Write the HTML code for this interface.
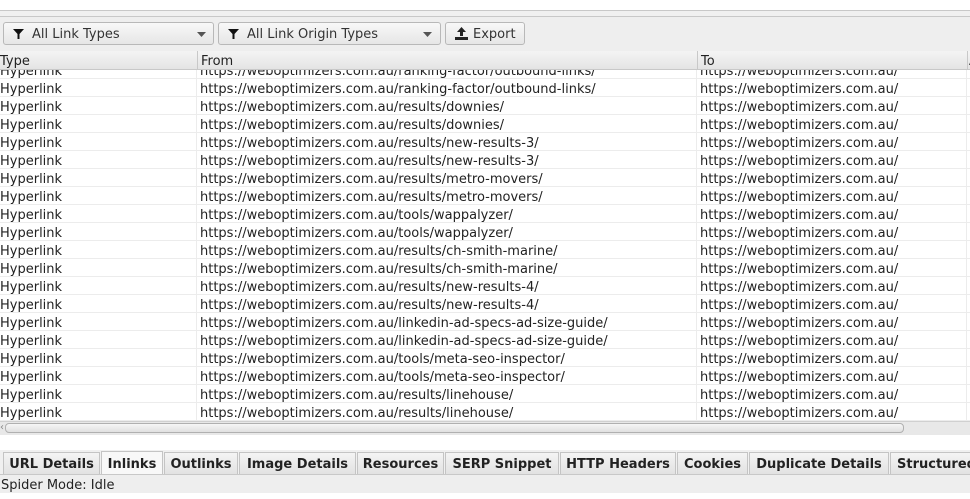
<!DOCTYPE html>
<html><head><meta charset="utf-8"><style>
*{margin:0;padding:0;box-sizing:border-box}
body{width:970px;height:493px;overflow:hidden;background:#fff;font-family:"DejaVu Sans","Liberation Sans",sans-serif;font-size:13px;color:#222;position:relative}
.abs{position:absolute}
.btn{position:absolute;top:22px;height:23px;border:1px solid #b8b8b8;border-radius:3px;background:linear-gradient(#f8f8f8,#e6e6e6);line-height:23px;color:#333}
.hdr{position:absolute;top:51px;height:19px;background:linear-gradient(#f4f4f4,#e4e4e4);border-bottom:1px solid #c8c8c8;line-height:22px;color:#222}
.row{position:absolute;left:0;width:970px;height:18px;border-bottom:1px solid #ececec;line-height:21px;white-space:nowrap}
.row span{position:absolute;top:0}
.tab{position:absolute;top:452px;height:22px;border:1px solid #c4c4c4;border-bottom:none;background:linear-gradient(#f4f4f4,#e2e2e2);font-weight:bold;line-height:23px;text-align:center;color:#222}
</style></head><body>
<div class="abs" style="left:0;top:10px;width:970px;height:1px;background:#c8c8c8"></div>
<div class="abs" style="left:0;top:11px;width:970px;height:5px;background:#f0f0f0"></div>
<div class="abs" style="left:0;top:16px;width:970px;height:35px;background:#eeeeee;border-top:1px solid #c8c8c8"></div>
<div class="btn" style="left:3px;width:211px"><svg class="abs" style="left:9px;top:6px" width="11" height="10" viewBox="0 0 11 10"><path d="M0 0H11L6.5 5V10H4.5V5Z" fill="#111"/></svg><span class="abs" style="left:28px">All Link Types</span><svg class="abs" style="left:193px;top:9px" width="9" height="5"><path d="M0 0H9L4.5 5Z" fill="#555"/></svg></div>
<div class="btn" style="left:218px;width:223px"><svg class="abs" style="left:9px;top:6px" width="11" height="10" viewBox="0 0 11 10"><path d="M0 0H11L6.5 5V10H4.5V5Z" fill="#111"/></svg><span class="abs" style="left:28px">All Link Origin Types</span><svg class="abs" style="left:204px;top:9px" width="9" height="5"><path d="M0 0H9L4.5 5Z" fill="#555"/></svg></div>
<div class="btn" style="left:445px;width:80px"><svg class="abs" style="left:9px;top:4px" width="13" height="13" viewBox="0 0 13 13"><path d="M6.5 0L11 5H8V9H5V5H2Z M0 10H13V13H0Z" fill="#222"/></svg><span class="abs" style="left:27px">Export</span></div>
<div class="abs" style="left:0;top:70px;width:970px;height:351px;background:#fff;overflow:hidden">
<div id="rows"></div>
</div>
<div class="hdr" style="left:0;width:197px;padding-left:0">Type</div>
<div class="hdr" style="left:197px;width:500px;border-left:1px solid #c8c8c8;padding-left:3px">From</div>
<div class="hdr" style="left:697px;width:270px;border-left:1px solid #c8c8c8;padding-left:3px">To</div>
<div class="hdr" style="left:967px;width:3px;border-left:1px solid #c8c8c8;padding-left:1px">A</div>
<div class="abs" style="left:196px;top:70px;width:1px;height:351px;background:#ececec"></div>
<div class="abs" style="left:696px;top:70px;width:1px;height:351px;background:#ececec"></div>
<div class="abs" style="left:966px;top:70px;width:1px;height:351px;background:#ececec"></div>
<div class="abs" style="left:0;top:421px;width:970px;height:14px;background:#e8e8e8;border-top:1px solid #d0d0d0"></div>
<div class="abs" style="left:0;top:422px;font-size:10px;color:#888;line-height:12px">&lsaquo;</div>
<div class="abs" style="left:5px;top:423px;width:899px;height:10px;border:1px solid #b0b0b0;border-radius:4px;background:linear-gradient(#f6f6f6,#e0e0e0)"></div>
<div class="abs" style="left:0;top:450px;width:970px;height:26px;background:#f0f0f0"></div>
<div class="tab" style="left:3px;width:97px">URL Details</div>
<div class="tab" style="left:101px;width:62px;background:#f8f8f8;top:451px;height:23px;line-height:25px">Inlinks</div>
<div class="tab" style="left:164px;width:74px">Outlinks</div>
<div class="tab" style="left:239px;width:117px">Image Details</div>
<div class="tab" style="left:357px;width:87px">Resources</div>
<div class="tab" style="left:445px;width:114px">SERP Snippet</div>
<div class="tab" style="left:560px;width:116px">HTTP Headers</div>
<div class="tab" style="left:677px;width:71px">Cookies</div>
<div class="tab" style="left:749px;width:140px">Duplicate Details</div>
<div class="tab" style="left:890px;width:90px;text-align:left;padding-left:6px">Structured Data</div>
<div class="abs" style="left:0;top:474px;width:970px;height:1px;background:#c8c8c8"></div>
<div class="abs" style="left:0;top:475px;width:970px;height:18px;background:#eeeeee;line-height:22px;padding-left:1px">Spider Mode: Idle</div>
<script>
var p=["ranking-factor/outbound-links/","ranking-factor/outbound-links/","results/downies/","results/downies/","results/new-results-3/","results/new-results-3/","results/metro-movers/","results/metro-movers/","tools/wappalyzer/","tools/wappalyzer/","results/ch-smith-marine/","results/ch-smith-marine/","results/new-results-4/","results/new-results-4/","linkedin-ad-specs-ad-size-guide/","linkedin-ad-specs-ad-size-guide/","tools/meta-seo-inspector/","tools/meta-seo-inspector/","results/linehouse/","results/linehouse/"];
var h="";for(var i=0;i<p.length;i++){h+='<div class="row" style="top:'+(-9+18*i)+'px"><span style="left:0">Hyperlink</span><span style="left:200px">https://weboptimizers.com.au/'+p[i]+'</span><span style="left:700px">https://weboptimizers.com.au/</span></div>';}
document.getElementById("rows").innerHTML=h;
</script>
</body></html>
